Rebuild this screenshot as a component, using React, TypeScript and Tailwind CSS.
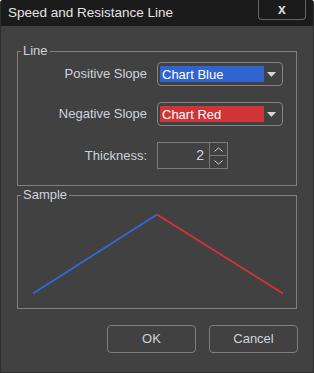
import React from "react";

const font = { fontFamily: '"Liberation Sans", Arial, sans-serif' };

function Combo({ label, color }: { label: string; color: string }) {
  return (
    <div className="flex items-center h-[24px] w-[126px] rounded-[4px] border border-[#858585] pl-[2px] pr-[4px]">
      <div
        className={`h-[16px] w-[104px] flex items-center pl-[2px] text-[13px] text-white leading-none ${color}`}
      >
        {label}
      </div>
      <div className="flex-1 flex justify-center items-center">
        <svg width="9" height="5" viewBox="0 0 9 5">
          <path d="M0 0 L9 0 L4.5 5 Z" fill="#d6d6d6" />
        </svg>
      </div>
    </div>
  );
}

export default function App() {
  return (
    <div
      className="w-[314px] h-[373px] bg-[#414141] flex flex-col border-x border-b border-[#2e2e2e] rounded-t-[3px] overflow-hidden"
      style={font}
    >
      <div className="h-[26px] bg-[#1b1b1b] flex items-start justify-between shrink-0">
        <div className="pl-[7px] pt-[5px] text-[13.5px] leading-[16px] text-[#e4e4e4]">
          Speed and Resistance Line
        </div>
        <div className="mr-[7px] w-[48px] h-[20px] border-x border-b border-[#666] rounded-b-[4px] flex items-center justify-center text-[#dcdcdc] font-bold text-[14px] leading-none pb-[2px]">
          x
        </div>
      </div>

      <div className="px-[16px] pt-[18px] flex flex-col">
        <fieldset className="border border-[#808080] pb-[16px]">
          <legend className="ml-[3px] px-[2px] text-[13px] leading-[14px] text-[#cdd3dc]">Line</legend>
          <div className="mt-[4px] flex flex-col gap-[16px]">
            <div className="flex items-center gap-[10px]">
              <div className="w-[129px] text-right text-[13px] text-[#cdd3dc]">Positive Slope</div>
              <Combo label="Chart Blue" color="bg-[#3064d0]" />
            </div>
            <div className="flex items-center gap-[10px]">
              <div className="w-[129px] text-right text-[13px] text-[#cdd3dc]">Negative Slope</div>
              <Combo label="Chart Red" color="bg-[#cf3437]" />
            </div>
            <div className="flex items-center gap-[10px]">
              <div className="w-[129px] text-right text-[13px] text-[#cdd3dc]">Thickness:</div>
              <div className="flex h-[27px] border border-[#7a7a7a]">
                <div className="w-[52px] flex items-center justify-end pr-[5px] text-[14px] text-[#cdd3dc] border-r border-[#7a7a7a]">
                  2
                </div>
                <div className="w-[17px] flex flex-col">
                  <div className="flex-1 flex items-center justify-center border-b border-[#7a7a7a]">
                    <svg width="9" height="5" viewBox="0 0 9 5">
                      <path d="M0.5 4.5 L4.5 0.8 L8.5 4.5" stroke="#cfcfcf" fill="none" strokeWidth="1" />
                    </svg>
                  </div>
                  <div className="flex-1 flex items-center justify-center">
                    <svg width="9" height="5" viewBox="0 0 9 5">
                      <path d="M0.5 0.5 L4.5 4.2 L8.5 0.5" stroke="#cfcfcf" fill="none" strokeWidth="1" />
                    </svg>
                  </div>
                </div>
              </div>
            </div>
          </div>
        </fieldset>

        <fieldset className="mt-[2px] border border-[#808080]">
          <legend className="ml-[3px] px-[2px] text-[13px] leading-[14px] text-[#cdd3dc]">Sample</legend>
          <svg width="278" height="106" viewBox="0 0 278 106" className="block">
            <line x1="15" y1="91.5" x2="139" y2="12.5" stroke="#3468d6" strokeWidth="2" />
            <line x1="139" y1="12.5" x2="265" y2="91.5" stroke="#d6303a" strokeWidth="2" />
          </svg>
        </fieldset>

        <div className="mt-[16px] flex justify-end gap-[13px] pr-[0px] mr-[-1px]">
          <button className="w-[89px] h-[28px] rounded-[4px] border border-[#7d7d7d] text-[13px] text-[#cdd3dc]">
            OK
          </button>
          <button className="w-[89px] h-[28px] rounded-[4px] border border-[#7d7d7d] text-[13px] text-[#cdd3dc]">
            Cancel
          </button>
        </div>
      </div>
    </div>
  );
}
